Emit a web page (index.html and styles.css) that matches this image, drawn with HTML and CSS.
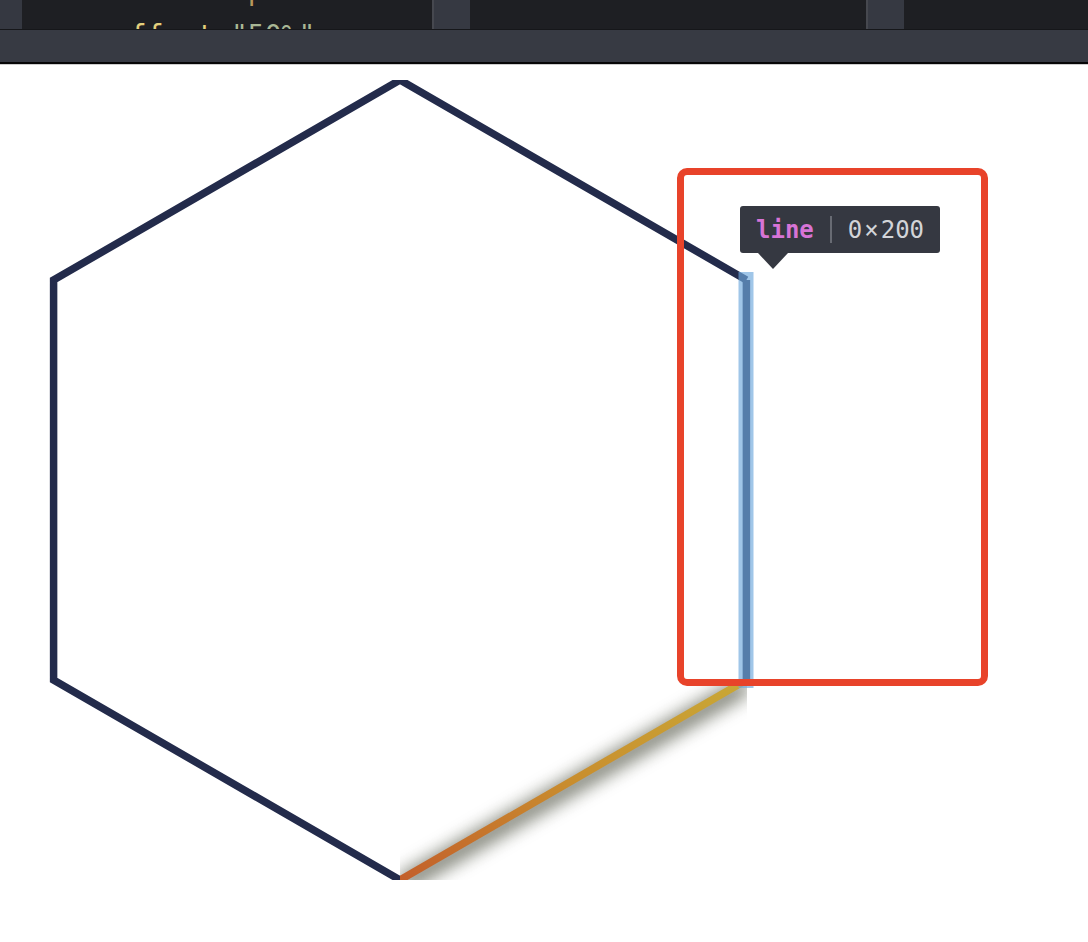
FILE: index.html
```html
<!DOCTYPE html>
<html lang="en">
<head>
<meta charset="utf-8">
<title>SVG inspector</title>
<link rel="stylesheet" href="styles.css">
</head>
<body>
<header class="editor">
  <div class="gutter"></div>
  <div class="pane code">
    <pre class="src"><span class="line">    <span class="tag">&lt;stop</span></span>
<span class="line"><span class="attr">offset</span><span class="eq">=</span><span class="val">"50%"</span></span></pre>
  </div>
  <div class="split"></div>
  <div class="pane mid"></div>
  <div class="split"></div>
  <div class="pane last"></div>
</header>
<div class="toolbar"></div>
<main class="stage">
  <svg class="art" width="800" height="800" viewBox="0 0 800 800" xmlns="http://www.w3.org/2000/svg">
    <defs>
      <linearGradient id="edge" x1="0" y1="1" x2="1" y2="0">
        <stop offset="0%" stop-color="#c35f2a"/>
        <stop offset="50%" stop-color="#c98e2e"/>
        <stop offset="100%" stop-color="#c9a836"/>
      </linearGradient>
      <filter id="shadow" x="0" y="0" width="1" height="1" color-interpolation-filters="sRGB">
        <feGaussianBlur in="SourceAlpha" stdDeviation="10" result="blur"/>
        <feOffset in="blur" dx="0" dy="5" result="moved"/>
        <feComponentTransfer in="moved" result="strong">
          <feFuncA type="linear" slope="1.6"/>
        </feComponentTransfer>
        <feFlood flood-color="#3a3e2c" result="tint"/>
        <feComposite in="tint" in2="strong" operator="in" result="shade"/>
        <feMerge>
          <feMergeNode in="shade"/>
          <feMergeNode in="SourceGraphic"/>
        </feMerge>
      </filter>
    </defs>
    <polyline points="746.4,200 400,0 53.6,200 53.6,600 400,800" fill="none" stroke="#232b4b" stroke-width="7.5" stroke-linejoin="miter"/>
    <line x1="746.4" y1="200" x2="746.4" y2="600" stroke="#232b4b" stroke-width="7.5"/>
    <line x1="400" y1="800" x2="746.4" y2="600" stroke="url(#edge)" stroke-width="7.5" filter="url(#shadow)"/>
    <rect x="738.5" y="192" width="15" height="416" fill="rgba(111,168,220,0.66)"/>
  </svg>
  <div class="inspect-box"></div>
  <div class="tip">
    <span class="tip-name">line</span>
    <span class="tip-sep"></span>
    <span class="tip-size">0<span class="times">×</span>200</span>
  </div>
</main>
</body>
</html>
```

FILE: styles.css
```css
html, body {
  margin: 0;
  padding: 0;
  background: #ffffff;
}

body {
  width: 1088px;
  height: 942px;
  overflow: hidden;
  font-family: "DejaVu Sans Mono", "Liberation Mono", monospace;
}

.editor {
  display: flex;
  height: 29px;
  border-bottom: 1px solid #16171a;
  background: #1e1f23;
  overflow: hidden;
}

.gutter {
  width: 22px;
  flex: none;
  background: #353841;
}

.pane {
  background: #1e1f23;
  overflow: hidden;
}

.code {
  width: 410px;
  flex: none;
}

.mid {
  width: 396px;
  flex: none;
}

.last {
  flex: 1;
}

.split {
  flex: none;
  width: 36px;
  background: #363942;
  border-left: 2px solid #46484f;
}

.src {
  margin: -32px 0 0 0;
  padding-left: 91px;
  font-family: "DejaVu Sans Mono", "Liberation Mono", monospace;
  font-size: 28px;
  line-height: 45px;
  white-space: pre;
  color: #9da0a6;
}

.tag { color: #b9975b; }
.attr { color: #e3cf7c; }
.eq { color: #a9adb4; }
.val { color: #a9b795; }

.toolbar {
  height: 32px;
  background: #373a43;
  border-bottom: 2px solid #060607;
  box-shadow: 0 1px 0 #cdcdcd;
}

.stage {
  position: relative;
  height: 862px;
  padding-top: 16px;
}

.art {
  display: block;
}

.inspect-box {
  position: absolute;
  left: 677px;
  top: 104px;
  width: 311px;
  height: 518px;
  box-sizing: border-box;
  border: 7px solid #e8432a;
  border-radius: 10px;
}

.tip {
  position: absolute;
  left: 740px;
  top: 142px;
  height: 47px;
  box-sizing: border-box;
  padding: 0 16px;
  display: flex;
  align-items: center;
  gap: 16px;
  background: #353841;
  border-radius: 3px;
  font-family: "DejaVu Sans Mono", "Liberation Mono", monospace;
  font-size: 24px;
  line-height: 1;
}

.tip::after {
  content: "";
  position: absolute;
  left: 18px;
  top: 47px;
  border-left: 15px solid transparent;
  border-right: 15px solid transparent;
  border-top: 16px solid #353841;
}

.tip-name {
  color: #d774d6;
  font-weight: bold;
}

.tip-sep {
  width: 2px;
  height: 27px;
  background: #686b73;
}

.tip-size {
  color: #d2d4d8;
}

.times {
  padding: 0 2px;
}
```
